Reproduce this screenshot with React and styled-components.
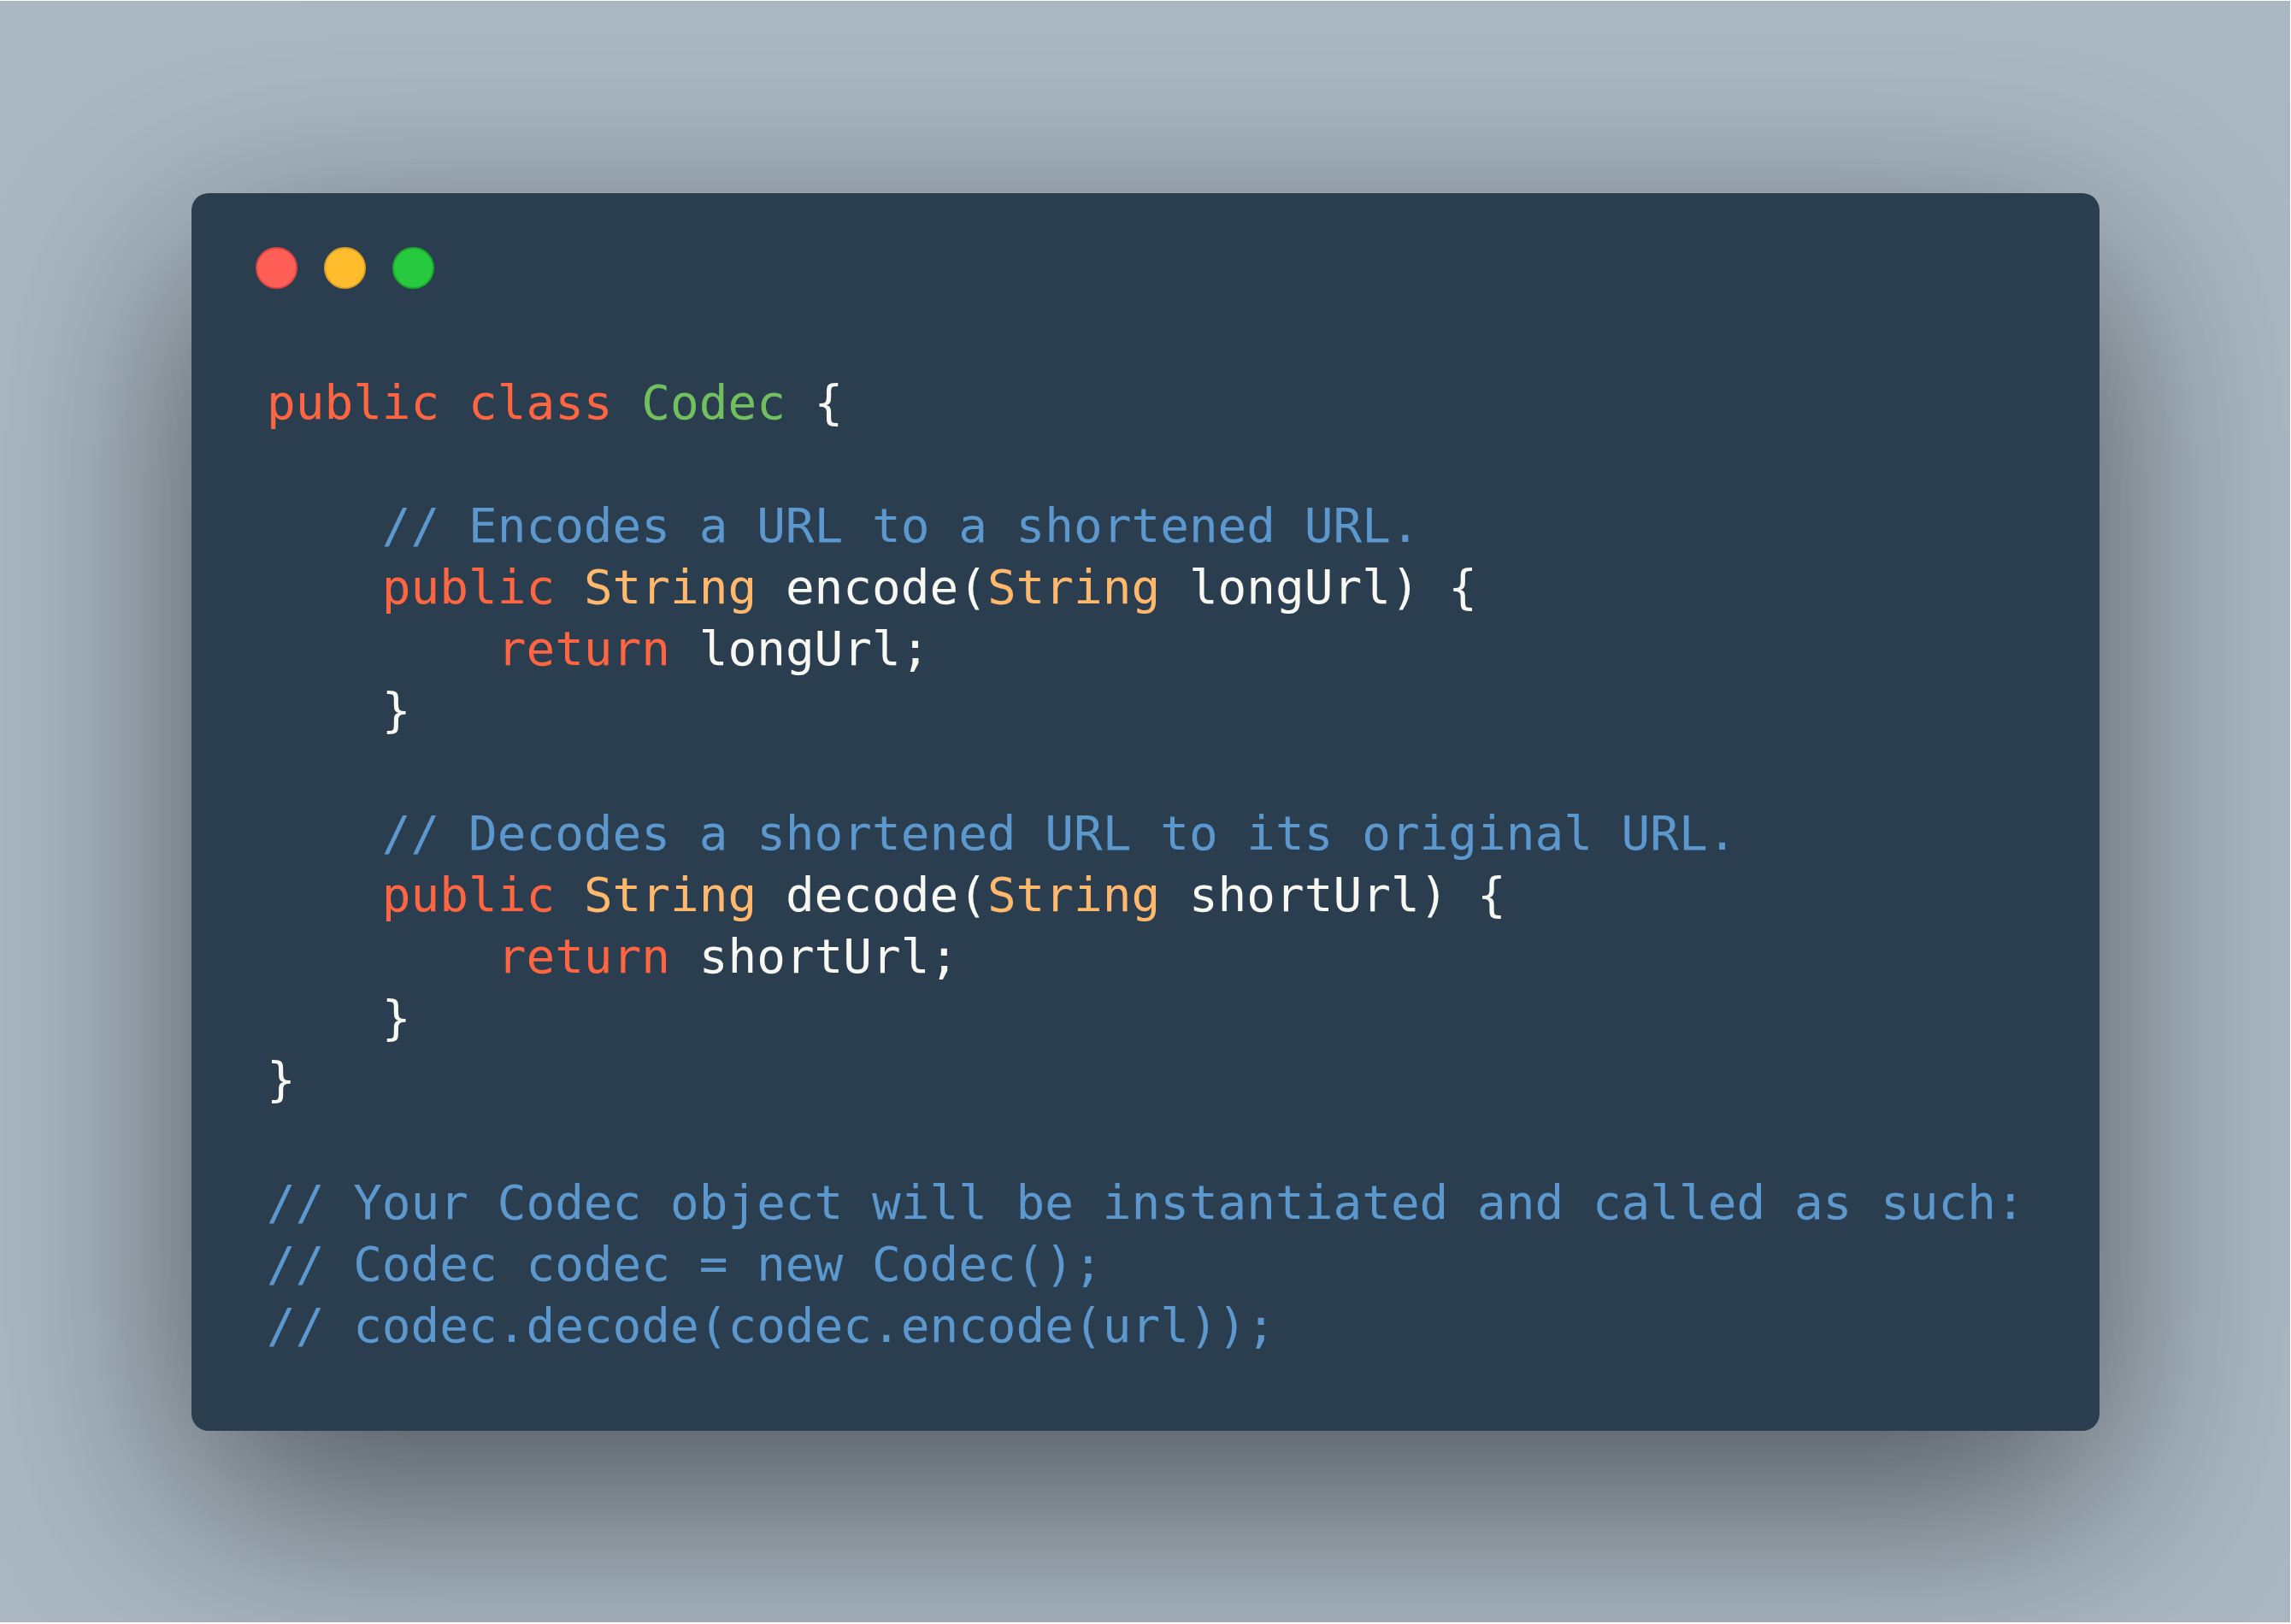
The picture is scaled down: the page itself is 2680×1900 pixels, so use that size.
import React from "react";
import styled, { createGlobalStyle } from "styled-components";

const Global = createGlobalStyle`
  html, body { margin: 0; padding: 0; background: #ffffff; }
  #root { width: 2680px; height: 1900px; }
`;

const Page = styled.div`
  width: 2679px;
  height: 1897px;
  margin-top: 1px;
  background: #abb8c3;
  box-sizing: border-box;
  padding: 225px 0 0 224px;
  overflow: hidden;
`;

const Window = styled.div`
  width: 2232px;
  box-sizing: border-box;
  background: #2b3e50;
  border-radius: 20px;
  box-shadow: 0 80px 272px rgba(0, 0, 0, 0.55);
  padding: 63px 0 87px 0;
`;

const Controls = styled.div`
  display: flex;
  gap: 31px;
  padding-left: 75px;
  height: 49px;
`;

const Dot = styled.span`
  width: 45px;
  height: 45px;
  border-radius: 50%;
  background: ${(p) => p.$fill};
  border: 2px solid ${(p) => p.$stroke};
`;

const Code = styled.pre`
  margin: 97px 0 0 0;
  padding-left: 88px;
  font-family: "DejaVu Sans Mono", "Liberation Mono", monospace;
  font-size: 56px;
  line-height: 72px;
  color: #f8f8f2;
  white-space: pre;
`;

const Line = styled.div`
  height: 72px;
`;

const colors = {
  kw: "#ff6541",
  def: "#72c05d",
  type: "#ffb86c",
  com: "#5c98cd",
  txt: "#f8f8f2",
};

const Tok = styled.span`
  color: ${(p) => colors[p.$k] || colors.txt};
`;

const lines = [
  [["kw", "public class "], ["def", "Codec"], ["txt", " {"]],
  [],
  [["txt", "    "], ["com", "// Encodes a URL to a shortened URL."]],
  [["txt", "    "], ["kw", "public "], ["type", "String"], ["txt", " encode("], ["type", "String"], ["txt", " longUrl) {"]],
  [["txt", "        "], ["kw", "return"], ["txt", " longUrl;"]],
  [["txt", "    }"]],
  [],
  [["txt", "    "], ["com", "// Decodes a shortened URL to its original URL."]],
  [["txt", "    "], ["kw", "public "], ["type", "String"], ["txt", " decode("], ["type", "String"], ["txt", " shortUrl) {"]],
  [["txt", "        "], ["kw", "return"], ["txt", " shortUrl;"]],
  [["txt", "    }"]],
  [["txt", "}"]],
  [],
  [["com", "// Your Codec object will be instantiated and called as such:"]],
  [["com", "// Codec codec = new Codec();"]],
  [["com", "// codec.decode(codec.encode(url));"]],
];

export default function App() {
  return (
    <>
      <Global />
      <Page>
        <Window>
          <Controls>
            <Dot $fill="#ff5f56" $stroke="#e0443e" />
            <Dot $fill="#ffbd2e" $stroke="#dea123" />
            <Dot $fill="#27c93f" $stroke="#1aab29" />
          </Controls>
          <Code>
            {lines.map((toks, i) => (
              <Line key={i}>
                {toks.map(([k, t], j) => (
                  <Tok key={j} $k={k}>
                    {t}
                  </Tok>
                ))}
              </Line>
            ))}
          </Code>
        </Window>
      </Page>
    </>
  );
}
